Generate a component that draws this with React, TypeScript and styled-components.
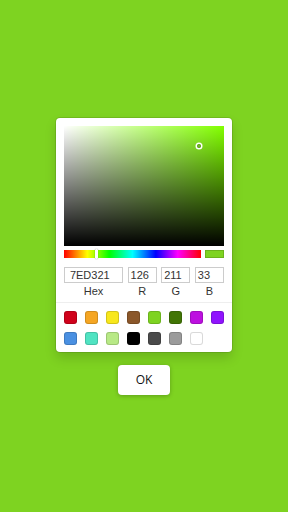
import styled, { createGlobalStyle } from 'styled-components';

const GlobalStyle = createGlobalStyle`
  html, body {
    margin: 0;
    padding: 0;
    background: #7ED321;
    font-family: "Liberation Sans", Arial, sans-serif;
  }
`

const Page = styled.div`
  width: 288px;
  height: 512px;
  display: flex;
  flex-direction: column;
  align-items: center;
  justify-content: center;
  gap: 13px;
`

const Card = styled.div`
  width: 176px;
  padding: 8px 8px 7px;
  box-sizing: border-box;
  background: #fff;
  border-radius: 4px;
  box-shadow: 0 0 0 1px rgba(0, 0, 0, 0.1), 0 6px 12px rgba(0, 0, 0, 0.15);
`

const Saturation = styled.div`
  position: relative;
  height: 120px;
  background: #82ff00;
  overflow: hidden;
`

const WhiteLayer = styled.div`
  position: absolute;
  inset: 0;
  background: linear-gradient(to right, #fff, rgba(255, 255, 255, 0));
`

const BlackLayer = styled.div`
  position: absolute;
  inset: 0;
  background: linear-gradient(to top, #000, rgba(0, 0, 0, 0));
`

const SatPointer = styled.div`
  position: absolute;
  width: 4px;
  height: 4px;
  border-radius: 50%;
  box-shadow: 0 0 0 1.5px #fff, inset 0 0 1px 1px rgba(0, 0, 0, 0.3);
  transform: translate(-2px, -2px);
`

const HueRow = styled.div`
  display: flex;
  gap: 4px;
  margin-top: 4px;
  height: 8px;
`

const Hue = styled.div`
  position: relative;
  flex: 1;
  background: linear-gradient(to right, #f00 0%, #ff0 17%, #0f0 33%, #0ff 50%, #00f 67%, #f0f 83%, #f00 100%);
`

const HuePointer = styled.div`
  position: absolute;
  top: -1px;
  width: 3px;
  height: 10px;
  background: #fff;
  border-radius: 1px;
  box-shadow: 0 0 1px rgba(0, 0, 0, 0.6);
  transform: translateX(-1px);
`

const Active = styled.div<{ $color: string }>`
  width: 19px;
  background: ${p => p.$color};
  box-shadow: inset 0 0 0 1px rgba(0, 0, 0, 0.15);
`

const Fields = styled.div`
  display: grid;
  grid-template-columns: 59px 29px 29px 29px;
  justify-content: space-between;
  margin-top: 9px;
`

const Field = styled.div`
  display: flex;
  flex-direction: column;
`

const Input = styled.div`
  height: 16px;
  box-sizing: border-box;
  padding: 0 0 0 10%;
  box-shadow: inset 0 0 0 1px #ccc;
  font-size: 11px;
  line-height: 16px;
  color: #333;
`

const Label = styled.div`
  text-align: center;
  font-size: 11px;
  line-height: 12px;
  color: #333;
  margin-top: 2px;
`

const Swatches = styled.div`
  display: grid;
  grid-template-columns: repeat(8, 13px);
  justify-content: space-between;
  row-gap: 8px;
  margin: 5px -8px 0;
  padding: 8px 8px 0;
  border-top: 1px solid #eee;
`

const Swatch = styled.div<{ $color: string }>`
  width: 13px;
  height: 13px;
  border-radius: 3px;
  background: ${p => p.$color};
  box-shadow: inset 0 0 0 1px rgba(0, 0, 0, 0.15);
`

const OkButton = styled.button`
  width: 52px;
  height: 30px;
  border: none;
  border-radius: 4px;
  background: #fff;
  font-family: "Open Sans", "Liberation Sans", sans-serif;
  font-size: 12px;
  color: #111;
  box-shadow: 0 1px 4px rgba(0, 0, 0, 0.25);
  padding: 0;
`

const presets = [
  '#D0021B', '#F5A623', '#F8E71C', '#8B572A', '#7ED321', '#417505', '#BD10E0', '#9013FE',
  '#4A90E2', '#50E3C2', '#B8E986', '#000000', '#4A4A4A', '#9B9B9B', '#FFFFFF',
]

export default function App() {
  const color = '#7ED321';
  const sat = 0.844;
  const val = 0.827;
  const hue = 85;

  return <>
    <GlobalStyle />
    <Page>
      <Card>
        <Saturation>
          <WhiteLayer />
          <BlackLayer />
          <SatPointer style={{ left: `${sat * 100}%`, top: `${(1 - val) * 100}%` }} />
        </Saturation>
        <HueRow>
          <Hue>
            <HuePointer style={{ left: `${hue / 360 * 100}%` }} />
          </Hue>
          <Active $color={color} />
        </HueRow>
        <Fields>
          <Field><Input>7ED321</Input><Label>Hex</Label></Field>
          <Field><Input>126</Input><Label>R</Label></Field>
          <Field><Input>211</Input><Label>G</Label></Field>
          <Field><Input>33</Input><Label>B</Label></Field>
        </Fields>
        <Swatches>
          {presets.map(c => <Swatch key={c} $color={c} />)}
        </Swatches>
      </Card>
      <OkButton>OK</OkButton>
    </Page>
  </>;
}
